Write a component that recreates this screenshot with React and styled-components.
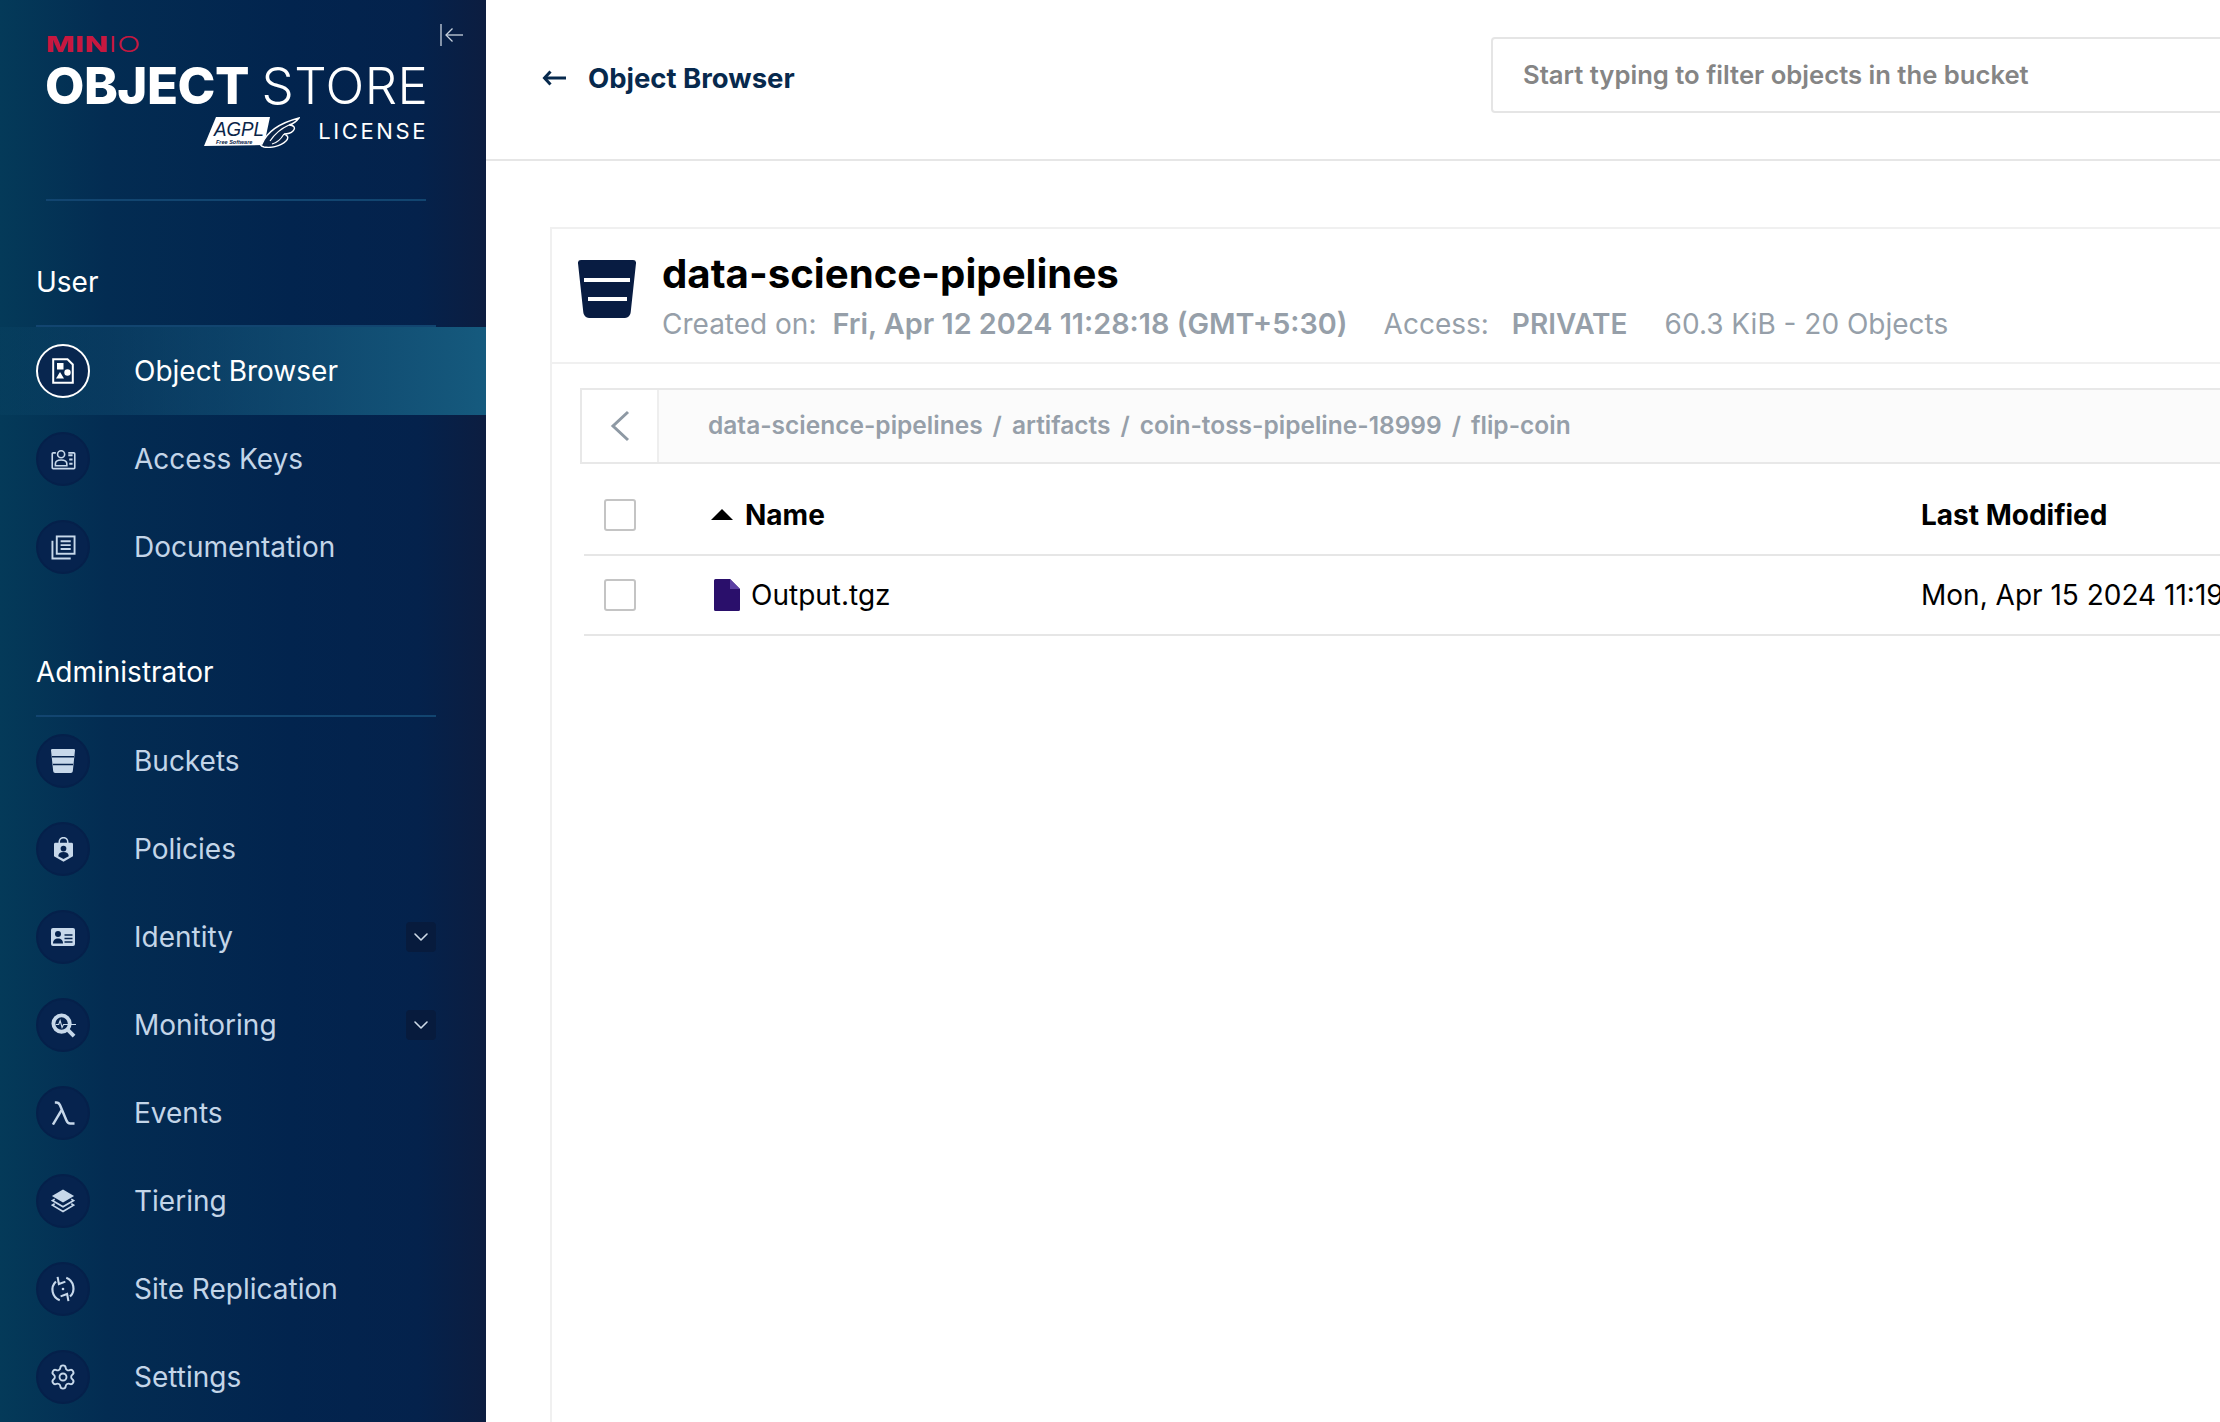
import React from 'react';
import styled, { createGlobalStyle } from 'styled-components';
import { Settings, ChevronDown } from 'lucide-react';

const Global = createGlobalStyle`
    html, body {
        margin: 0;
        height: 100%;
        overflow: hidden;
        background: #fff;
        font-family: Inter, "Noto Sans", sans-serif;
    }
`;

const Page = styled.div`
    display: flex;
    height: 100vh;
    overflow: hidden;
`;

const Sidebar = styled.aside`
    position: relative;
    flex: 0 0 486px;
    width: 486px;
    overflow: hidden;
    background: linear-gradient(90deg, #043a59 0%, #032c52 22%, #02244e 60%, #04224c 86%, #0c1d40 100%);
`;

const Collapse = styled.div`
    position: absolute;
    top: 23px;
    left: 440px;
    line-height: 0;
    color: #c9d3de;
`;

const Logo = styled.div`
    display: flex;
    flex-direction: column;
    height: 201px;
    margin: 0 60px 0 46px;
    padding-top: 36px;
    box-sizing: border-box;
    border-bottom: 2px solid #124570;
`;

const MinioMark = styled.div`
    font-size: 22px;
    line-height: 16px;
    height: 16px;
    color: #c8173f;
    transform: scaleX(1.38);
    transform-origin: left center;
    font-weight: 800;
    letter-spacing: 0.5px;

    span {
        font-weight: 300;
    }
`;

const ProductName = styled.div`
    margin-top: 15px;
    margin-left: -1px;
    font-size: 51px;
    line-height: 37px;
    color: #fff;
    white-space: nowrap;
    font-weight: 800;
    letter-spacing: -0.5px;

    span {
        margin-left: 2px;
        font-weight: 300;
        letter-spacing: 0.4px;
    }
`;

const LicenseRow = styled.div`
    display: flex;
    justify-content: flex-end;
    align-items: center;
    gap: 18px;
    margin-top: 12px;
    height: 31px;
`;

const LicenseText = styled.span`
    font-size: 22px;
    line-height: 26px;
    margin-bottom: 2px;
    color: #fff;
    letter-spacing: 2.6px;
    margin-right: -2px;
`;

const SectionLabel = styled.div`
    display: flex;
    align-items: flex-end;
    height: 126px;
    margin: 0 50px 0 36px;
    padding-bottom: 26px;
    box-sizing: border-box;
    border-bottom: 2px solid #124570;
    font-size: 28px;
    line-height: 34px;
    color: #fff;
`;

const NavRow = styled.div`
    display: flex;
    align-items: center;
    height: 88px;
    padding: 0 50px 0 36px;
    font-size: 28px;
    color: ${(p) => (p.$active ? '#fff' : '#c3d5e8')};
    background: ${(p) =>
        p.$active ? 'linear-gradient(90deg, rgba(21,90,126,0.1) 0%, #155a7e 100%)' : 'none'};
`;

const IconCircle = styled.span`
    display: flex;
    align-items: center;
    justify-content: center;
    flex: 0 0 54px;
    height: 54px;
    box-sizing: border-box;
    border-radius: 50%;
    color: ${(p) => (p.$active ? '#fff' : '#c7d8ea')};
    background: ${(p) => (p.$active ? '#08264f' : '#06234e')};
    border: 2px solid ${(p) => (p.$active ? '#fff' : '#05204a')};
`;

const NavText = styled.span`
    flex: 1;
    margin-left: 44px;
`;

const Expand = styled.span`
    display: flex;
    align-items: center;
    justify-content: center;
    width: 30px;
    height: 30px;
    border-radius: 4px;
    background: #071b3d;
    color: #cfdbe8;
`;

const Main = styled.main`
    flex: 1;
    min-width: 0;
    overflow: hidden;
`;

const TopBar = styled.header`
    display: flex;
    height: 161px;
    box-sizing: border-box;
    border-bottom: 2px solid #e6e6e6;
`;

const BackLink = styled.div`
    display: flex;
    align-items: center;
    flex: 0 0 949px;
    height: 156px;
    margin-left: 56px;
    gap: 22px;
    font-size: 27.5px;
    font-weight: 700;
    color: #07294d;
`;

const Search = styled.div`
    flex: 0 0 1000px;
    display: flex;
    align-items: center;
    height: 76px;
    margin-top: 37px;
    padding-left: 30px;
    padding-bottom: 1px;
    box-sizing: border-box;
    border: 2px solid #e5e5e5;
    border-radius: 4px;
    font-size: 25.65px;
    font-weight: 600;
    color: #858585;
`;

const Card = styled.section`
    width: 1800px;
    height: 1200px;
    margin: 66px 0 0 64px;
    box-sizing: border-box;
    border: 2px solid #f0f0f0;
`;

const CardHead = styled.div`
    display: flex;
    height: 135px;
    padding: 31px 0 0 26px;
    box-sizing: border-box;
    border-bottom: 2px solid #f0f0f0;
`;

const HeadText = styled.div`
    margin-left: 26px;
    margin-top: -8px;
`;

const Title = styled.h1`
    margin: 0;
    font-size: 40.2px;
    line-height: 44px;
    font-weight: 700;
    color: #000;
`;

const Meta = styled.div`
    display: flex;
    margin-top: 11px;
    font-size: 28px;
    line-height: 34px;
    color: #969fa9;
    white-space: nowrap;
`;

const MetaStrong = styled.strong`
    margin-left: ${(p) => p.$gap || 16}px;
    font-size: ${(p) => p.$size || 28}px;
    font-weight: 600;
`;

const MetaItem = styled.span`
    margin-left: ${(p) => p.$gap || 0}px;
`;

const Breadcrumb = styled.div`
    display: flex;
    align-items: center;
    height: 76px;
    width: 1740px;
    margin: 24px 0 0 28px;
    box-sizing: border-box;
    border: 2px solid #e8e8e8;
    border-right: 0;
    background: #fbfbfb;
`;

const BackButton = styled.div`
    display: flex;
    align-items: center;
    justify-content: center;
    flex: 0 0 75px;
    height: 100%;
    background: #fff;
    border-right: 2px solid #eeeeee;
    color: #8e99a4;
`;

const Crumbs = styled.div`
    margin-left: 49px;
    padding-bottom: 2px;
    font-size: 24.5px;
    font-weight: 600;
    color: #969fa9;
    white-space: nowrap;
`;

const CrumbSep = styled.span`
    margin: 0 10px;
`;

const Table = styled.div`
    width: 1730px;
    margin-left: 32px;
`;

const TableRow = styled.div`
    display: grid;
    grid-template-columns: 127px 1210px 1fr;
    align-items: center;
    height: ${(p) => p.$height}px;
    padding-top: ${(p) => p.$pad || 0}px;
    box-sizing: border-box;
    border-bottom: 2px solid #e6e6e6;
    font-size: 28px;
    font-weight: ${(p) => (p.$head ? 700 : 400)};
    color: #000;
    white-space: nowrap;
`;

const Checkbox = styled.span`
    display: block;
    width: 32px;
    height: 32px;
    margin-left: 20px;
    box-sizing: border-box;
    border: 2px solid #c4c4c4;
    border-radius: 3px;
    background: #fff;
`;

const NameCell = styled.span`
    display: flex;
    align-items: center;
    gap: ${(p) => p.$gap}px;
    margin-left: ${(p) => p.$offset || 0}px;
`;

const icons = {
    browser: (
        <svg width="22" height="26" viewBox="0 0 22 26" fill="currentColor">
            <path d="M2 1.200h13.500l5.300 5.300V24.800H1.200V1.200z" fill="none" stroke="currentColor" strokeWidth="2" />
            <rect x="5" y="5" width="6.500" height="6.500" />
            <circle cx="15.500" cy="14.500" r="3.200" />
            <path d="M8 14l4 6.500H4z" />
        </svg>
    ),
    keys: (
        <svg width="25" height="21" viewBox="0 0 26 22" fill="none" stroke="currentColor" strokeWidth="1.700">
            <path d="M5 4H2.200a1 1 0 0 0-1 1v14.600a1 1 0 0 0 1 1h21.600a1 1 0 0 0 1-1V5a1 1 0 0 0-1-1H18" />
            <circle cx="10.500" cy="5.500" r="3.700" />
            <path d="M4.500 17.500v-2c0-2.500 2.500-4 6-4s6 1.500 6 4v2z" />
            <path d="M18 6.500h4.500M19 11h3.500M19 15.500h3.500" strokeWidth="2.200" />
        </svg>
    ),
    docs: (
        <svg width="25" height="25" viewBox="0 0 26 26" fill="none" stroke="currentColor" strokeWidth="2">
            <rect x="6" y="1.500" width="18.500" height="18" />
            <path d="M10 6.500h10.500M10 10.500h10.500M10 14.500h10.500" />
            <path d="M1.500 6v18.500h19" />
        </svg>
    ),
    buckets: (
        <svg width="24" height="24" viewBox="0 0 24 24" fill="currentColor">
            <path d="M1.200 0h21.600A1.200 1.200 0 0 1 24 1.300L21.800 22.300A2 2 0 0 1 19.800 24H4.200a2 2 0 0 1-2-1.700L0 1.300A1.200 1.200 0 0 1 1.200 0z" />
            <path d="M1 7.800h22M2 15.500h20" stroke="#06234e" strokeWidth="1.500" />
        </svg>
    ),
    policies: (
        <svg width="19" height="25" viewBox="0 0 20 26">
            <path fill="none" stroke="currentColor" strokeWidth="1.600" d="M5.500 7V5a4.500 4.500 0 0 1 9 0v2" />
            <path fill="currentColor" d="M1.500 6h17A1.500 1.500 0 0 1 20 7.500V20l-10 6L0 20V7.500A1.500 1.500 0 0 1 1.500 6z" />
            <circle cx="10" cy="12" r="3" fill="#06234e" />
            <path fill="#06234e" d="M4.500 20c0-3 2-4.500 5.500-4.500s5.500 1.500 5.500 4.500l-5.500 3z" />
        </svg>
    ),
    identity: (
        <svg width="24" height="18" viewBox="0 0 24 18">
            <rect width="24" height="18" rx="2" fill="currentColor" />
            <circle cx="7" cy="6" r="3" fill="#06234e" />
            <path fill="#06234e" d="M2 15.500c0-3.500 2-5 5-5s5 1.500 5 5z" />
            <path stroke="#06234e" strokeWidth="1.500" d="M13.500 7h8M13.500 10.500h8M13.500 14h8" />
        </svg>
    ),
    monitoring: (
        <svg width="25" height="25" viewBox="0 0 26 26" fill="none">
            <circle cx="11" cy="11" r="8.500" stroke="currentColor" strokeWidth="4" />
            <path d="M17 17l7 7" stroke="currentColor" strokeWidth="4" />
            <path d="M5 12h3l1.500-4 2 7 1.500-3H26" stroke="currentColor" strokeWidth="1.200" />
        </svg>
    ),
    events: (
        <svg width="24" height="24" viewBox="0 0 25 25" fill="none" stroke="currentColor" strokeWidth="2.600">
            <path d="M4 1.500h1.500c2 0 3 .8 3.800 2.700L16 20c.8 2 1.800 3.400 4 3.400h4.500" />
            <path d="M11 9.500L2 24.500" />
        </svg>
    ),
    tiering: (
        <svg width="24" height="24" viewBox="0 0 26 25">
            <path fill="currentColor" d="M13 0l12 7-12 7-12-7z" />
            <path fill="none" stroke="currentColor" strokeWidth="1.800" d="M4 10.500L1.500 12 13 18.800 24.500 12 22 10.500" />
            <path fill="none" stroke="currentColor" strokeWidth="1.800" d="M4 15.500L1.500 17 13 23.800 24.500 17 22 15.500" />
        </svg>
    ),
    replication: (
        <svg width="26" height="26" viewBox="0 0 24 24" fill="none" stroke="currentColor" strokeWidth="2">
            <path d="M5.500 5A10.500 10.500 0 0 0 9 22.400" />
            <path d="M15 1.700A10.500 10.500 0 0 1 18.500 19" />
            <path d="M7 .8l1.200 6.600 6-2.200" strokeWidth="1.900" />
            <path d="M17 23.200l-1.200-6.600-6 2.200" strokeWidth="1.900" />
            <circle cx="12" cy="12" r="1.200" fill="currentColor" stroke="none" />
        </svg>
    ),
};

const BackArrow = () => (
    <svg width="24" height="16" viewBox="0 0 24 16" fill="none" stroke="#07294d" strokeWidth="3">
        <path d="M24 8H3" />
        <path d="M8.500 1.500L2.500 8l6 6.500" />
    </svg>
);

const AgplBadge = () => (
    <svg width="96" height="32" viewBox="0 0 96 32">
        <path d="M12 1H66L60 29 0 30z" fill="#fff" />
        <path d="M58 28C62 18 72 8 95 2 92 6 89 8 85 9 90 9 92 12 89 15 86 18 83 18 80 18 84 19 85 22 82 25 76 31 66 32 60 31 56 30 56 28 58 28z" fill="#0a2448" stroke="#fff" strokeWidth="1.400" />
        <path d="M66 25C70 19 76 13 85 9M68 28C73 27 77 23 80 18" stroke="#fff" strokeWidth="1.200" fill="none" />
        <text x="10" y="20" fontFamily='"Liberation Sans", sans-serif' fontStyle="italic" fontSize="20" fill="#0a2448" textLength="50" lengthAdjust="spacingAndGlyphs">AGPL</text>
        <text x="12" y="27.500" fontFamily='"Liberation Sans", sans-serif' fontStyle="italic" fontWeight="700" fontSize="5.500" fill="#0a2448">Free Software</text>
    </svg>
);

const userItems = [
    { label: 'Object Browser', icon: 'browser', active: true },
    { label: 'Access Keys', icon: 'keys' },
    { label: 'Documentation', icon: 'docs' },
];

const adminItems = [
    { label: 'Buckets', icon: 'buckets' },
    { label: 'Policies', icon: 'policies' },
    { label: 'Identity', icon: 'identity', expand: true },
    { label: 'Monitoring', icon: 'monitoring', expand: true },
    { label: 'Events', icon: 'events' },
    { label: 'Tiering', icon: 'tiering' },
    { label: 'Site Replication', icon: 'replication' },
    { label: 'Settings', icon: 'settings' },
];

const crumbs = ['data-science-pipelines', 'artifacts', 'coin-toss-pipeline-18999', 'flip-coin'];

const NavItem = ({ item }) => (
    <NavRow $active={item.active}>
        <IconCircle $active={item.active}>
            {item.icon === 'settings' ? <Settings size={28} strokeWidth={1.6} /> : icons[item.icon]}
        </IconCircle>
        <NavText>{item.label}</NavText>
        {item.expand && (
            <Expand>
                <ChevronDown size={24} strokeWidth={1.6} />
            </Expand>
        )}
    </NavRow>
);

export default function App() {
    return (
        <Page>
            <Global />
            <Sidebar>
                <Logo>
                    <MinioMark>MIN<span>IO</span></MinioMark>
                    <ProductName>OBJECT <span>STORE</span></ProductName>
                    <LicenseRow>
                        <AgplBadge />
                        <LicenseText>LICENSE</LicenseText>
                    </LicenseRow>
                </Logo>
                <Collapse>
                    <svg width="24" height="24" viewBox="0 0 24 24" fill="none" stroke="currentColor" strokeWidth="1.300">
                        <path d="M1 1v22" />
                        <path d="M23 12H6" />
                        <path d="M12.500 5.500L6 12l6.500 6.500" />
                    </svg>
                </Collapse>
                <SectionLabel>User</SectionLabel>
                {userItems.map((item) => <NavItem key={item.label} item={item} />)}
                <SectionLabel>Administrator</SectionLabel>
                {adminItems.map((item) => <NavItem key={item.label} item={item} />)}
            </Sidebar>
            <Main>
                <TopBar>
                    <BackLink>
                        <BackArrow />
                        Object Browser
                    </BackLink>
                    <Search>Start typing to filter objects in the bucket</Search>
                </TopBar>
                <Card>
                    <CardHead>
                        <svg width="58" height="58" viewBox="0 0 58 58">
                            <path fill="#081c42" d="M3 0h52a3 3 0 0 1 3 3.300l-5.300 49A6 6 0 0 1 47 58H11a6 6 0 0 1-5.700-5.700L0 3.300A3 3 0 0 1 3 0z" />
                            <rect x="6" y="18" width="46" height="4" fill="#fff" />
                            <rect x="10" y="37" width="39" height="4" fill="#fff" />
                        </svg>
                        <HeadText>
                            <Title>data-science-pipelines</Title>
                            <Meta>
                                Created on:
                                <MetaStrong $size={28.8}>Fri, Apr 12 2024 11:28:18 (GMT+5:30)</MetaStrong>
                                <MetaItem $gap={36}>Access:</MetaItem>
                                <MetaStrong $gap={23}>PRIVATE</MetaStrong>
                                <MetaItem $gap={37}>60.3 KiB - 20 Objects</MetaItem>
                            </Meta>
                        </HeadText>
                    </CardHead>
                    <Breadcrumb>
                        <BackButton>
                            <svg width="20" height="32" viewBox="0 0 20 32" fill="none" stroke="currentColor" strokeWidth="3">
                                <path d="M18 2L3 16l15 14" />
                            </svg>
                        </BackButton>
                        <Crumbs>
                            {crumbs.map((crumb, i) => (
                                <React.Fragment key={crumb}>
                                    {i > 0 && <CrumbSep>/</CrumbSep>}
                                    {crumb}
                                </React.Fragment>
                            ))}
                        </Crumbs>
                    </Breadcrumb>
                    <Table>
                        <TableRow $head $height={92} $pad={11}>
                            <Checkbox />
                            <NameCell $gap={12}>
                                <svg width="22" height="11" viewBox="0 0 22 11">
                                    <path d="M11 0l11 11H0z" fill="#000" />
                                </svg>
                                Name
                            </NameCell>
                            <span>Last Modified</span>
                        </TableRow>
                        <TableRow $height={80}>
                            <Checkbox />
                            <NameCell $gap={11} $offset={3}>
                                <svg width="26" height="32" viewBox="0 0 26 32">
                                    <path fill="#2a0f6b" d="M1.500 0H16l10 10v20.500a1.500 1.500 0 0 1-1.500 1.500h-23A1.500 1.500 0 0 1 0 30.500v-29A1.500 1.500 0 0 1 1.500 0z" />
                                    <path fill="#5b3fa3" d="M16 0l10 10H16z" />
                                </svg>
                                Output.tgz
                            </NameCell>
                            <span>Mon, Apr 15 2024 11:19:25 (GMT+5:30)</span>
                        </TableRow>
                    </Table>
                </Card>
            </Main>
        </Page>
    );
}
